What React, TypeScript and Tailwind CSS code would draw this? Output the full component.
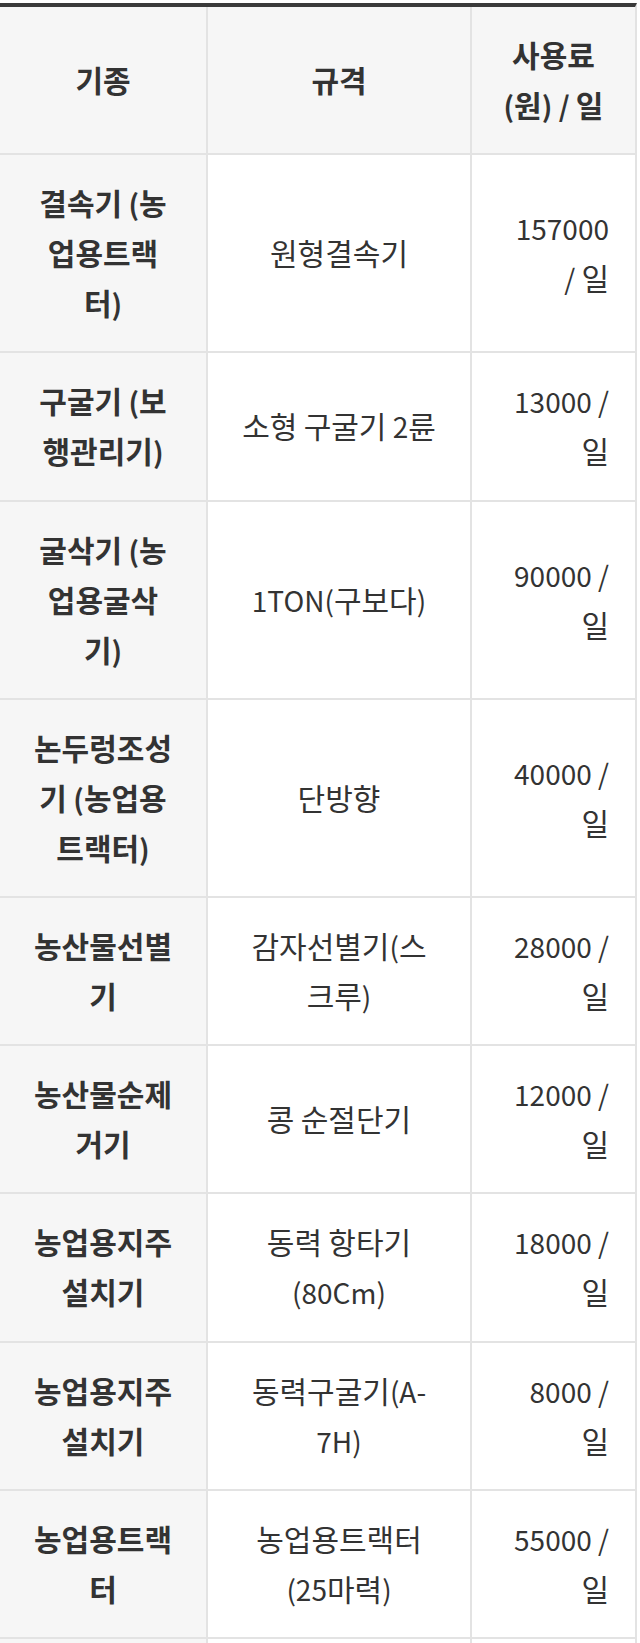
import React from "react";

type Row = { a: string[]; b: string[]; c: string[] };

const rows: Row[] = [
  { a: ["결속기 (농", "업용트랙", "터)"], b: ["원형결속기"], c: ["157000", "/ 일"] },
  { a: ["구굴기 (보", "행관리기)"], b: ["소형 구굴기 2륜"], c: ["13000 /", "일"] },
  { a: ["굴삭기 (농", "업용굴삭", "기)"], b: ["1TON(구보다)"], c: ["90000 /", "일"] },
  { a: ["논두렁조성", "기 (농업용", "트랙터)"], b: ["단방향"], c: ["40000 /", "일"] },
  { a: ["농산물선별", "기"], b: ["감자선별기(스", "크루)"], c: ["28000 /", "일"] },
  { a: ["농산물순제", "거기"], b: ["콩 순절단기"], c: ["12000 /", "일"] },
  { a: ["농업용지주", "설치기"], b: ["동력 항타기", "(80Cm)"], c: ["18000 /", "일"] },
  { a: ["농업용지주", "설치기"], b: ["동력구굴기(A-", "7H)"], c: ["8000 /", "일"] },
  { a: ["농업용트랙", "터"], b: ["농업용트랙터", "(25마력)"], c: ["55000 /", "일"] },
];

function Text({ s }: { s: string }) {
  const parts = s.split(/([\uAC00-\uD7A3]+)/);
  return (
    <>
      {parts.map((p, i) =>
        /[\uAC00-\uD7A3]/.test(p) ? (
          <span key={i} className="text-[30px] leading-none">
            {p}
          </span>
        ) : (
          <span key={i}>{p}</span>
        )
      )}
    </>
  );
}

function Lines({ lines }: { lines: string[] }) {
  return (
    <div className="whitespace-nowrap">
      {lines.map((l, i) => (
        <div key={i} className="h-[50px]">
          <Text s={l} />
        </div>
      ))}
    </div>
  );
}

export default function App() {
  return (
    <div
      className="w-[640px] h-[1643px] overflow-hidden bg-white text-[#333333] text-[28px] leading-[50px]"
      style={{ fontFamily: '"Noto Sans CJK KR", "Noto Sans", sans-serif' }}
    >
      <div className="mt-[3px] w-[637px] border-t-4 border-t-[#3a3a3a] border-r-2 border-r-[#e3e3e3]">
        <div className="grid grid-cols-[208px_264px_1fr] border-b-2 border-b-[#e3e3e3] bg-[#f6f6f6] font-bold">
          <div className="flex items-center justify-center border-r-2 border-r-[#e3e3e3] px-[26px] py-[23.1px] text-center">
            <Lines lines={["기종"]} />
          </div>
          <div className="flex items-center justify-center border-r-2 border-r-[#e3e3e3] px-[26px] py-[23.1px] text-center">
            <Lines lines={["규격"]} />
          </div>
          <div className="flex items-center justify-center px-[26px] py-[23.1px] text-center">
            <Lines lines={["사용료", "(원) / 일"]} />
          </div>
        </div>
        {rows.map((r, i) => (
          <div key={i} className="grid grid-cols-[208px_264px_1fr] border-b-2 border-b-[#e3e3e3]">
            <div className="flex items-center justify-center border-r-2 border-r-[#e3e3e3] bg-[#f6f6f6] px-[26px] py-[23.1px] text-center font-bold">
              <Lines lines={r.a} />
            </div>
            <div className="flex items-center justify-center border-r-2 border-r-[#e3e3e3] px-[26px] py-[23.1px] text-center">
              <Lines lines={r.b} />
            </div>
            <div className="flex items-center justify-end px-[26px] py-[23.1px] text-right">
              <Lines lines={r.c} />
            </div>
          </div>
        ))}
        <div className="grid grid-cols-[208px_264px_1fr] h-[146px]">
          <div className="border-r-2 border-r-[#e3e3e3] bg-[#f6f6f6]" />
          <div className="border-r-2 border-r-[#e3e3e3]" />
          <div />
        </div>
      </div>
    </div>
  );
}
